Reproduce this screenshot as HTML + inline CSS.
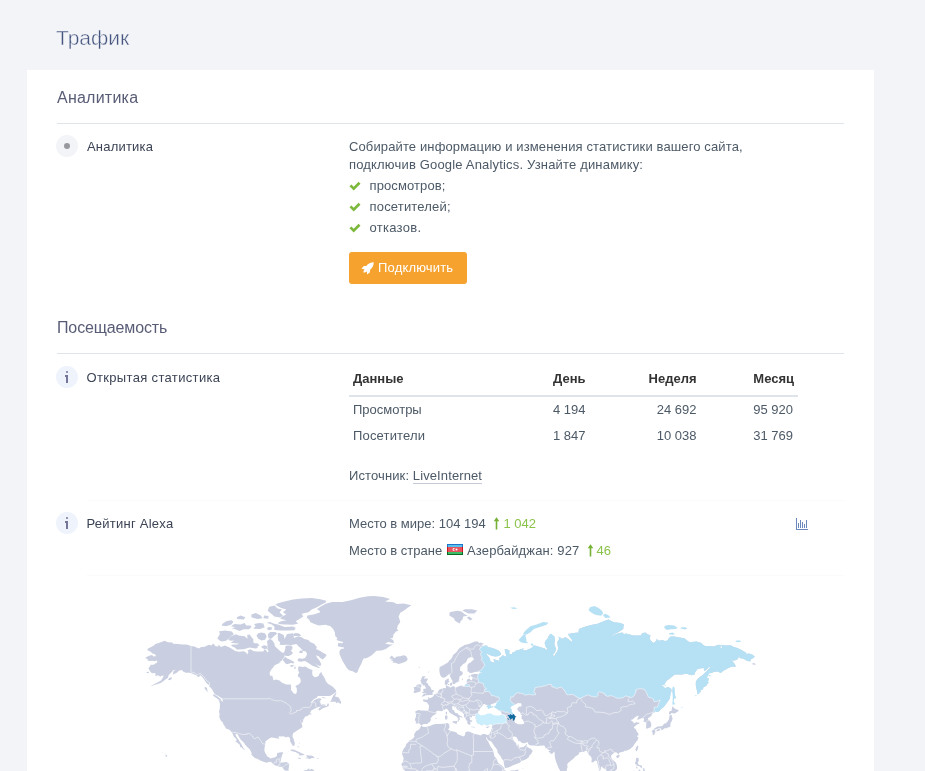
<!DOCTYPE html>
<html lang="ru">
<head>
<meta charset="utf-8">
<title>Трафик</title>
<style>
*{box-sizing:border-box}
html,body{margin:0;padding:0}
body{width:925px;height:771px;overflow:hidden;background:#f2f4f8;font-family:"Liberation Sans",Arial,sans-serif;font-size:13px;color:#4c5966;position:relative}
.title{position:absolute;left:56px;top:26px;font-size:21px;line-height:24px;color:#46557f;font-weight:normal;margin:0;-webkit-text-stroke:0.45px #f2f4f8}
.card{position:absolute;left:27px;top:70px;width:847px;height:720px;background:#fff}
.abs{position:absolute;white-space:nowrap;line-height:15px;font-size:13px}
.h2{position:absolute;left:57px;font-size:16px;line-height:18px;color:#585c75;margin:0;font-weight:normal;white-space:nowrap}
.hr{position:absolute;left:57px;width:787px;height:1px;background:#dfe3ea}
.ico{position:absolute;left:56px;width:22px;height:22px;border-radius:50%;background:#f3f4f7}
.ico.i{background:#eef3fc}
.ico .dot{position:absolute;left:8px;top:8px;width:6px;height:6px;border-radius:50%;background:#98989f}
.ico.i:before{content:"";position:absolute;left:10px;top:5px;width:2.4px;height:2.4px;border-radius:1px;background:#74769a}
.ico.i:after{content:"";position:absolute;left:10px;top:9px;width:2.4px;height:8px;background:#74769a;box-shadow:-1px -3.5px 0 -3px #74769a}
.ico.i i{position:absolute;left:9px;top:9px;width:2px;height:1.6px;background:#74769a}
.lbl{color:#3b4354}
.txt{color:#4c5966}
.b{font-weight:bold;color:#333}
.btn{position:absolute;left:349px;top:252px;width:118px;height:32px;background:#f5a22f;border-radius:3px}
.btn span{position:absolute;left:29px;top:8px;color:#fff;font-size:13px;line-height:15px;white-space:nowrap;letter-spacing:.17px}
.grn{color:#8bc34a}
a.lnk{color:#4c5966;text-decoration:none;border-bottom:1px solid #c5cbd6}
svg.ic{position:absolute;overflow:visible}
#root{position:absolute;left:0;top:0;width:925px;height:771px;will-change:transform}
</style>
</head>
<body>
<div class="card"></div>
<div id="root">
<h1 class="title">Трафик</h1>

<h2 class="h2" style="top:89px;letter-spacing:.23px">Аналитика</h2>
<div class="hr" style="top:123px"></div>
<div class="ico" style="top:135px"><div class="dot"></div></div>
<div class="abs lbl" style="left:87px;top:139px;letter-spacing:.2px">Аналитика</div>
<div class="abs txt" style="left:349px;top:139px;letter-spacing:.125px">Собирайте информацию и изменения статистики вашего сайта,</div>
<div class="abs txt" style="left:349px;top:157px;letter-spacing:.175px">подключив Google Analytics. Узнайте динамику:</div>
<svg class="ic" style="left:349px;top:181px" width="12" height="10" viewBox="0 0 12 10"><path d="M0.5 5.3 L2.4 3.4 L4.7 5.7 L9.6 0.8 L11.5 2.7 L4.7 9.5 Z" fill="#7cb83b"/></svg>
<svg class="ic" style="left:349px;top:202px" width="12" height="10" viewBox="0 0 12 10"><path d="M0.5 5.3 L2.4 3.4 L4.7 5.7 L9.6 0.8 L11.5 2.7 L4.7 9.5 Z" fill="#7cb83b"/></svg>
<svg class="ic" style="left:349px;top:223px" width="12" height="10" viewBox="0 0 12 10"><path d="M0.5 5.3 L2.4 3.4 L4.7 5.7 L9.6 0.8 L11.5 2.7 L4.7 9.5 Z" fill="#7cb83b"/></svg>
<div class="abs txt" style="left:369.5px;top:178px;letter-spacing:.11px">просмотров;</div>
<div class="abs txt" style="left:369.5px;top:199px;letter-spacing:.18px">посетителей;</div>
<div class="abs txt" style="left:369.5px;top:220px;letter-spacing:.29px">отказов.</div>
<div class="btn">
  <svg class="ic" style="left:12px;top:9.5px" width="13" height="13" viewBox="0 0 12 12"><path fill="#fff" d="M11.8 0.2 C9 0.2 6.6 1.4 4.9 3.6 L2.6 3.7 L0.4 6.3 L2.9 6.6 L3.3 7 C2.6 7.6 2.2 8.6 2.3 9.7 C3.4 9.8 4.4 9.4 5 8.7 L5.4 9.1 L5.7 11.6 L8.3 9.4 L8.4 7.1 C10.6 5.4 11.8 3 11.8 0.2 Z"/></svg>
  <span>Подключить</span>
</div>

<h2 class="h2" style="top:319px;letter-spacing:-.13px">Посещаемость</h2>
<div class="hr" style="top:353px"></div>
<div class="ico i" style="top:366px"><i></i></div>
<div class="abs lbl" style="left:86.5px;top:370px;letter-spacing:.34px">Открытая статистика</div>

<div class="abs b" style="left:353px;top:371px">Данные</div>
<div class="abs b" style="left:553px;top:371px">День</div>
<div class="abs b" style="right:228.5px;top:371px">Неделя</div>
<div class="abs b" style="right:131px;top:371px">Месяц</div>
<div style="position:absolute;left:349px;top:395px;width:449px;height:2px;background:#dfe3ea"></div>
<div class="abs txt" style="left:353px;top:402px">Просмотры</div>
<div class="abs txt" style="left:553px;top:402px">4 194</div>
<div class="abs txt" style="right:228.5px;top:402px">24 692</div>
<div class="abs txt" style="right:132px;top:402px">95 920</div>
<div class="abs txt" style="left:353px;top:428px;letter-spacing:.17px">Посетители</div>
<div class="abs txt" style="left:553px;top:428px">1 847</div>
<div class="abs txt" style="right:228.5px;top:428px">10 038</div>
<div class="abs txt" style="right:132px;top:428px">31 769</div>
<div class="abs txt" style="left:349px;top:468px;letter-spacing:.11px">Источник: <a class="lnk">LiveInternet</a></div>

<div style="position:absolute;left:87px;top:500px;width:757px;height:1px;background:#fafbfc"></div>
<div style="position:absolute;left:87px;top:575px;width:757px;height:1px;background:#fafbfc"></div>
<div class="ico i" style="top:512px"><i></i></div>
<div class="abs lbl" style="left:86.5px;top:516px;letter-spacing:.24px">Рейтинг Alexa</div>
<div class="abs txt" style="left:349px;top:516px">Место в мире: 104 194</div>
<svg class="ic" style="left:493px;top:517px" width="7" height="13" viewBox="0 0 7 13"><path d="M3.5 0.2 L6.3 4.2 L4.3 4.2 L4.3 12.6 L2.7 12.6 L2.7 4.2 L0.7 4.2 Z" fill="#76b136"/></svg>
<div class="abs grn" style="left:503.5px;top:516px">1 042</div>
<div class="abs txt" style="left:349px;top:543px">Место в стране</div>
<svg class="ic" style="left:447px;top:544px" width="16" height="11" viewBox="0 0 16 11"><rect width="16" height="3" fill="#1f74c8"/><rect x="1" y="1" width="14" height="2" fill="#56c1ec"/><rect y="3" width="16" height="5" fill="#d0101f"/><rect x="1" y="3" width="14" height="5" fill="#e5545e"/><rect y="8" width="16" height="3" fill="#0a6a22"/><rect x="1" y="8" width="14" height="2" fill="#3ebd68"/><circle cx="7" cy="5.5" r="1.4" fill="#fff"/><circle cx="7.5" cy="5.5" r="1" fill="#e5545e"/><circle cx="9.6" cy="5.5" r=".9" fill="#fff"/></svg>
<div class="abs txt" style="left:467px;top:543px;letter-spacing:.14px">Азербайджан: 927</div>
<svg class="ic" style="left:587px;top:544px" width="7" height="13" viewBox="0 0 7 13"><path d="M3.5 0.2 L6.3 4.2 L4.3 4.2 L4.3 12.6 L2.7 12.6 L2.7 4.2 L0.7 4.2 Z" fill="#76b136"/></svg>
<div class="abs grn" style="left:596.5px;top:543px">46</div>
<svg class="ic" style="left:796px;top:518px" width="12" height="12" viewBox="0 0 12 12" shape-rendering="crispEdges"><path fill="#6a88bc" d="M0 0h1v11h11v1h-12z M2 5h1v5h-1z M4 2h1v8h-1z M6 4h1v6h-1z M8 6h1v4h-1z M10 2h1v8h-1z"/></svg>
</div>
<svg id="map" width="925" height="771" viewBox="0 0 925 771" style="position:absolute;left:0;top:0">
<defs><clipPath id="land"><path d="M421.4 725.5L420.2 724.6L419.2 723.2L417.5 723.6L415.6 723.6L416.0 721.7L414.8 720.0L415.0 718.9L415.8 717.3L416.1 715.3L415.8 713.4L415.1 711.7L416.7 710.7L417.9 709.9L421.3 710.4L424.5 710.6L425.8 710.8L427.9 710.8L428.3 710.5L428.8 708.2L429.1 706.2L428.9 704.9L427.9 704.2L427.2 702.6L425.8 701.9L423.6 701.4L422.9 700.2L423.0 699.6L424.1 699.4L426.4 699.7L427.6 699.5L428.4 699.5L428.2 698.3L427.6 697.2L428.8 697.2L429.1 698.0L430.5 698.1L431.1 697.7L432.8 696.7L433.7 696.1L433.7 694.9L434.1 694.4L435.0 694.2L435.9 693.7L436.9 693.3L437.6 692.5L437.9 692.0L439.0 689.9L440.1 689.3L441.2 688.8L442.9 688.8L443.2 688.1L444.6 688.1L445.5 688.5L445.8 687.7L446.0 687.1L445.6 685.3L445.2 683.9L444.7 683.8L444.8 682.5L444.9 681.0L445.6 680.0L447.9 678.8L449.0 678.4L448.9 679.2L448.5 680.4L449.6 681.6L448.4 682.3L448.0 683.4L447.5 683.8L447.1 684.0L447.0 685.0L447.0 685.5L448.3 686.5L449.8 686.5L449.5 687.4L450.4 687.5L451.5 687.1L452.2 686.4L453.8 685.9L454.3 686.7L455.1 687.5L455.3 687.7L457.4 687.0L459.6 686.0L460.8 685.7L462.1 685.5L462.7 686.5L464.0 686.6L464.8 685.9L465.0 685.2L466.9 683.4L466.7 681.5L466.8 680.3L467.6 679.3L469.4 678.4L470.4 679.8L471.1 680.3L472.0 680.2L472.4 678.3L472.6 677.0L470.9 676.3L470.9 675.5L470.8 674.8L471.9 674.5L473.1 674.2L474.9 673.8L476.1 674.1L478.7 674.2L479.3 673.6L480.3 673.1L482.3 673.1L481.9 672.6L480.3 672.3L479.6 671.9L479.8 671.0L478.3 671.4L476.8 671.7L474.6 672.0L473.4 672.4L470.0 673.3L468.8 671.8L467.2 671.3L467.5 670.0L467.5 668.7L467.3 666.8L467.6 664.7L469.2 663.1L470.3 662.7L472.6 660.4L474.2 659.5L472.7 657.5L472.1 657.3L470.3 657.3L468.6 658.0L467.5 658.7L466.9 660.4L465.5 662.8L462.9 664.2L461.5 666.0L460.5 666.6L460.1 668.4L460.1 669.5L460.2 671.0L461.5 671.3L462.4 671.9L462.9 673.3L462.3 674.6L461.5 675.6L459.9 676.1L459.5 676.8L459.3 678.4L458.9 679.7L458.8 681.1L457.5 682.3L456.0 682.6L455.3 682.9L455.4 683.8L454.4 684.1L453.3 684.2L453.0 683.6L452.6 682.6L452.1 682.0L452.8 681.1L451.8 680.0L451.2 678.6L450.2 677.1L449.9 675.5L449.6 674.8L449.2 673.1L448.8 674.3L448.0 675.2L447.0 675.7L445.9 676.7L444.6 677.5L443.0 677.8L441.2 676.7L440.5 675.5L439.9 674.3L439.5 671.8L439.3 670.1L439.5 668.7L439.6 667.1L441.3 666.3L444.1 664.7L445.9 663.4L447.3 663.1L448.7 661.5L449.2 660.6L450.5 659.5L451.7 658.3L452.4 656.8L453.1 655.1L455.5 653.0L457.2 651.3L458.2 649.5L459.9 647.8L463.1 645.9L465.0 644.7L467.0 644.4L470.1 643.5L471.3 642.9L474.9 641.5L478.1 641.6L479.1 643.2L480.5 642.4L483.9 643.8L481.7 644.9L480.3 644.7L482.1 645.8L483.5 645.6L484.2 646.3L485.4 645.2L487.1 645.8L488.0 647.2L490.5 647.5L493.9 648.6L498.7 650.6L500.7 653.0L501.1 654.2L499.0 655.9L495.6 656.5L492.2 655.9L489.7 655.1L486.1 653.5L487.1 655.3L488.8 657.0L490.2 659.5L490.2 660.9L492.2 662.3L495.8 662.6L493.9 661.2L493.6 659.1L495.6 659.8L498.2 660.6L499.9 660.8L499.0 658.2L501.6 656.5L502.9 655.3L505.8 656.8L506.3 655.6L505.5 653.3L504.6 649.1L507.5 649.5L509.6 650.7L509.2 653.3L510.1 654.3L512.1 653.9L512.6 652.2L514.3 651.9L515.7 650.7L519.4 649.8L523.7 648.2L522.9 650.1L525.4 650.4L528.0 649.4L531.4 648.1L533.9 645.6L536.0 645.8L540.7 647.3L544.8 648.4L546.7 650.1L547.5 649.2L545.5 646.3L544.6 642.9L545.5 640.7L547.5 638.8L548.4 636.2L550.9 634.0L554.3 636.2L555.0 640.4L554.3 643.5L555.2 646.6L556.2 649.5L554.5 653.0L552.6 655.1L554.3 655.9L556.0 653.0L557.2 651.6L558.2 648.6L557.6 645.0L557.4 642.0L559.1 639.1L558.6 636.6L561.8 638.8L563.7 638.2L565.4 636.9L567.1 638.2L569.7 640.1L571.5 642.0L572.2 640.1L569.7 636.9L567.9 634.0L577.3 632.6L578.2 633.6L579.0 628.9L584.1 626.9L590.9 625.1L597.7 623.7L601.1 622.3L606.2 620.2L608.5 619.4L611.2 620.9L613.9 622.3L620.7 623.0L624.1 624.8L623.3 627.2L623.3 628.9L618.2 632.3L612.2 634.9L611.3 635.9L618.2 633.3L622.4 632.6L624.1 634.3L625.8 633.6L633.5 635.6L635.2 635.6L641.1 635.6L642.0 633.3L645.4 632.6L647.1 634.0L650.5 635.6L649.6 638.8L651.3 641.3L650.3 639.9L652.2 642.0L653.9 642.9L656.4 640.4L656.6 639.1L659.0 640.7L662.4 640.1L665.0 641.0L667.5 640.4L668.9 637.9L670.9 636.6L674.3 636.6L679.4 637.5L684.5 638.2L687.1 640.4L689.6 642.3L696.4 641.6L701.5 642.9L703.2 645.0L705.6 646.3L708.3 645.9L713.5 646.6L716.5 645.6L717.4 645.0L720.3 644.7L720.8 645.9L720.3 648.6L722.0 648.1L721.3 644.7L725.4 645.5L730.5 645.3L733.9 646.9L737.3 648.1L741.5 650.1L745.8 652.5L746.6 653.9L749.2 653.6L752.6 654.8L754.8 656.5L753.4 657.9L750.6 659.5L750.6 661.2L748.7 661.2L745.8 660.2L743.2 658.4L739.8 658.2L739.3 655.9L737.6 659.3L734.7 660.6L733.0 660.4L731.3 660.1L733.0 661.7L734.7 663.9L735.9 666.8L732.2 666.6L727.9 668.2L725.4 669.7L723.7 670.5L720.8 672.9L717.7 671.5L713.5 672.0L711.8 673.1L709.2 673.3L708.3 675.3L706.6 677.8L708.7 678.3L708.3 681.0L707.8 682.2L708.9 682.2L706.6 685.1L706.8 685.5L703.2 687.4L703.1 689.3L701.0 690.0L700.4 692.0L698.1 694.3L697.6 694.5L697.3 692.0L696.4 688.6L695.8 685.1L695.9 681.5L697.8 678.8L699.8 677.1L702.4 675.3L705.8 672.0L708.3 669.5L710.9 666.6L708.3 667.6L707.5 668.9L704.1 671.3L703.8 667.9L699.8 668.4L697.3 669.2L694.7 673.1L694.7 674.6L691.3 675.3L687.6 674.1L684.5 673.8L682.8 674.6L679.1 674.6L674.7 674.5L670.1 678.3L666.7 680.8L666.1 681.6L664.1 685.1L661.0 685.5L664.1 687.0L665.0 688.4L667.5 687.0L669.2 687.4L671.4 689.1L671.6 691.6L670.6 693.2L670.1 696.5L669.7 698.8L667.5 702.0L665.8 704.2L663.8 706.9L661.5 708.8L658.8 711.5L657.1 711.9L655.4 711.3L654.2 712.4L653.4 713.0L651.8 714.0L651.7 715.6L649.3 717.6L648.1 718.0L647.8 719.2L649.5 720.4L650.7 722.2L651.2 723.6L651.3 725.5L650.7 727.3L648.8 727.9L646.2 728.8L645.9 727.9L646.2 726.3L646.2 724.2L646.4 722.7L645.4 722.2L643.2 721.4L644.0 720.2L643.9 718.6L642.6 717.7L642.3 717.9L637.9 719.8L637.2 720.1L637.7 718.0L638.7 716.6L638.2 715.8L636.9 716.0L634.5 717.8L632.6 719.6L631.4 719.6L631.1 720.6L633.5 722.0L633.8 723.4L635.2 722.8L636.5 722.0L637.6 722.4L639.4 722.8L639.3 723.8L636.9 724.4L635.9 725.4L634.1 727.1L634.0 728.1L635.7 729.0L636.7 731.3L638.1 733.2L638.4 733.8L638.4 735.3L636.9 736.0L636.7 736.4L638.4 737.1L637.9 739.0L637.9 740.1L636.7 740.9L635.9 742.3L634.7 743.8L633.5 745.8L633.0 746.5L631.9 747.2L630.6 748.7L629.6 749.2L627.5 750.3L625.8 750.7L625.3 751.0L624.3 750.5L624.1 751.4L621.6 752.1L619.9 752.6L619.0 753.2L618.7 754.6L617.8 754.2L617.6 753.3L616.6 752.4L615.3 752.3L614.7 752.4L612.7 753.9L611.3 755.3L611.0 756.9L612.2 759.2L614.2 761.3L615.3 762.0L616.3 763.4L617.0 766.0L617.1 767.7L616.8 769.3L614.9 771.0L613.2 771.9L612.4 773.4L609.3 774.9L609.6 772.5L608.8 771.9L607.1 771.5L606.2 770.3L605.4 769.1L602.8 768.0L602.2 766.5L601.1 766.8L601.0 768.2L600.5 770.0L599.8 771.7L599.9 773.9L601.1 775.1L602.0 777.3L603.7 778.0L605.4 779.7L606.9 782.8L607.1 787.2L603.3 784.7L601.8 780.4L600.6 778.2L598.2 776.1L598.2 774.3L598.8 772.5L598.9 769.6L598.8 768.4L597.9 765.6L597.4 763.5L597.1 761.3L595.7 760.6L594.7 761.1L593.1 762.5L591.3 762.1L591.8 759.5L591.4 757.2L589.1 754.9L587.5 752.6L587.2 751.0L585.8 750.5L584.1 751.7L582.4 752.1L581.1 752.1L579.0 752.6L578.8 753.9L578.5 754.6L577.0 755.5L575.6 756.3L574.1 758.1L572.7 759.2L571.0 760.6L570.0 761.6L568.6 762.5L567.3 763.9L567.3 765.6L567.6 767.2L566.8 769.3L566.8 772.0L565.4 773.7L564.0 774.6L562.9 775.8L561.8 775.1L560.6 772.6L560.0 770.4L558.3 767.5L557.1 764.2L556.5 763.0L555.7 760.4L554.8 756.9L554.7 755.1L554.8 754.4L554.7 753.2L554.3 751.2L553.8 751.9L552.6 753.5L551.8 753.9L550.8 753.5L549.4 752.3L548.3 751.1L550.1 750.5L550.8 749.8L549.6 750.1L549.0 750.1L547.7 749.3L547.0 748.5L545.7 748.0L544.9 746.5L544.3 745.6L542.4 745.5L540.9 745.8L539.0 745.7L537.0 746.0L535.8 745.9L534.1 745.6L531.4 745.4L529.3 745.0L528.0 743.4L527.8 742.3L526.8 742.2L525.4 743.1L524.4 743.3L522.0 743.1L520.5 741.6L518.6 740.9L517.4 739.0L516.4 737.0L515.2 736.8L514.3 736.2L513.7 737.1L512.6 737.1L512.6 738.2L513.3 739.7L514.2 741.4L515.4 742.5L516.3 743.5L516.4 744.9L517.4 746.7L517.4 745.2L518.1 744.1L518.7 745.6L518.8 746.9L518.3 747.4L520.5 747.6L523.5 747.1L525.1 745.7L526.3 744.5L526.9 743.6L526.9 745.1L526.9 746.0L527.5 747.3L530.7 748.7L532.7 750.7L531.9 752.6L530.7 754.4L529.1 755.7L529.1 757.1L527.1 758.6L525.1 759.7L523.0 760.4L521.3 761.0L519.8 762.8L517.7 763.6L514.5 764.8L512.6 765.6L510.1 766.7L507.5 767.7L505.0 768.0L504.6 766.8L504.0 764.2L503.8 762.5L503.5 761.4L503.4 760.6L501.6 758.6L500.9 756.7L499.4 754.8L497.6 752.4L497.3 750.1L495.7 747.8L494.3 746.1L493.0 743.9L491.7 741.9L489.8 740.5L490.5 737.9L490.0 739.4L489.2 741.2L488.1 740.1L487.3 738.8L486.3 737.1L486.1 738.1L486.9 739.9L488.5 742.0L488.8 743.1L489.3 744.1L490.3 746.1L491.4 748.1L491.9 748.1L493.3 751.2L494.3 755.8L494.6 756.7L496.3 758.3L498.1 762.8L499.4 764.0L501.1 764.9L503.7 767.4L504.6 768.4L503.6 769.8L504.4 769.8L505.0 770.2L507.5 771.8L510.9 770.6L514.7 770.3L518.3 769.4L518.4 771.8L517.4 773.4L514.3 781.1L512.6 789.6L417.3 789.6L417.3 782.3L412.6 778.9L408.4 775.1L407.6 773.4L405.4 771.0L402.5 768.4L402.5 766.6L401.2 764.4L402.9 762.1L403.7 758.5L402.9 756.2L401.9 753.7L402.2 751.9L403.8 748.5L405.4 746.7L406.3 744.1L408.2 742.2L409.0 740.8L411.7 739.6L413.6 738.1L414.6 736.2L414.1 735.8L414.3 734.1L415.2 732.6L416.5 730.8L418.0 730.2L419.3 729.3L420.5 727.1L420.9 725.9L421.9 725.7L422.1 726.5L424.3 727.0L425.9 726.9L429.8 726.1L431.1 725.5L433.2 724.6L436.1 724.0L439.6 724.1L442.7 723.8L444.1 723.8L447.7 722.9L448.5 723.9L449.8 723.4L449.0 724.8L449.1 725.9L449.8 726.5L449.2 728.0L448.1 729.6L449.8 730.4L450.6 731.0L453.4 731.5L456.7 732.4L457.2 734.0L459.2 734.7L461.6 735.7L463.5 736.5L465.1 735.1L465.1 733.0L466.0 732.1L467.9 731.5L469.5 731.8L470.3 732.1L471.8 733.0L473.5 733.3L473.8 734.1L475.2 734.1L477.3 734.4L479.5 735.0L480.2 735.4L481.8 734.7L482.7 734.1L483.9 734.0L485.2 734.1L485.9 734.5L487.1 734.9L488.5 734.8L489.3 734.3L490.1 733.1L490.5 731.7L491.4 729.6L491.9 728.5L491.8 726.5L492.1 725.4L492.5 724.4L492.2 723.8L491.1 724.5L489.8 724.0L488.7 725.0L486.9 725.4L485.4 724.5L483.2 723.9L482.9 725.0L482.7 725.2L481.3 725.2L480.5 724.4L479.1 724.0L477.6 723.6L477.3 722.8L477.3 721.9L475.7 721.0L476.6 720.4L476.7 719.6L476.4 719.0L475.3 718.6L475.5 717.6L476.4 716.4L475.3 716.2L475.0 715.9L472.5 715.7L471.8 716.8L471.6 717.7L470.8 717.6L469.9 716.6L469.4 717.6L470.4 719.3L469.9 719.8L471.1 720.6L471.9 721.2L471.8 722.3L471.1 721.8L470.1 721.8L470.4 722.8L470.4 724.7L469.2 724.8L467.9 724.0L466.9 722.2L467.9 721.1L466.9 721.0L466.2 719.8L465.3 718.6L465.0 717.9L464.0 716.7L464.1 715.0L463.9 713.9L461.8 712.3L458.9 710.5L456.8 709.2L456.3 707.4L455.5 706.7L454.5 707.7L453.9 706.3L454.4 706.0L452.0 706.5L452.2 707.5L452.3 709.4L453.9 710.3L455.1 712.7L458.5 713.8L458.0 714.4L459.6 715.4L461.5 716.3L462.4 717.3L462.2 718.0L460.2 716.7L459.2 717.8L460.1 719.5L459.0 720.2L458.3 721.7L457.6 721.4L457.9 720.3L458.4 719.6L458.2 718.9L457.4 717.5L456.1 716.3L455.1 716.0L454.0 715.2L451.8 714.1L451.0 713.4L449.8 712.8L448.8 711.6L448.5 710.4L447.6 709.4L446.1 708.6L444.6 709.8L443.4 710.1L442.3 711.0L441.0 711.3L440.1 710.9L438.8 710.7L437.3 710.7L436.2 711.3L436.1 712.4L436.6 713.0L434.7 714.8L433.1 715.4L432.4 716.2L431.0 717.7L430.4 718.7L431.3 720.1L430.1 720.9L429.8 722.3L428.7 722.5L427.2 724.1L426.8 723.9L425.0 724.1L423.5 724.1L421.8 725.2Z"/></clipPath></defs>
<path fill="#c9cfe0" d="M144.9 657.9L148.5 655.9L151.9 655.1L153.6 656.5L155.6 656.2L155.9 655.3L154.4 653.9L152.4 653.6L151.0 651.9L147.1 650.0L148.1 648.4L153.6 645.8L155.4 644.1L158.7 643.1L164.6 640.7L168.0 642.3L172.3 642.4L173.1 643.7L178.2 644.1L182.5 644.6L186.6 644.6L191.0 646.1L194.4 646.4L198.7 648.4L201.2 646.9L204.6 646.7L208.9 644.7L211.4 645.6L213.1 643.4L215.7 646.3L218.2 646.6L218.7 644.4L220.8 646.9L225.0 645.6L230.1 647.8L235.2 651.0L238.7 651.7L243.8 651.2L246.3 652.8L247.2 654.5L248.4 652.2L247.5 650.4L250.6 649.2L253.1 651.0L257.4 651.6L260.8 651.6L263.3 651.6L264.2 649.5L265.9 650.1L267.6 652.5L268.8 651.0L267.6 650.1L267.1 646.6L267.6 645.0L266.9 641.3L270.1 638.8L272.7 640.7L274.4 643.5L274.9 646.3L277.3 648.6L280.7 651.6L282.9 653.0L284.1 652.2L285.4 648.6L285.3 646.3L287.2 645.5L291.4 645.6L292.6 647.5L292.1 649.5L290.6 650.4L292.6 652.2L292.4 653.9L288.9 655.9L286.3 655.9L284.3 655.3L284.6 657.0L282.9 658.4L281.4 660.9L278.6 662.3L280.9 662.6L276.6 664.2L274.4 665.5L272.7 667.9L271.0 670.0L269.6 672.8L270.1 675.8L272.3 675.8L273.5 680.3L276.1 679.5L279.5 680.5L282.0 682.7L286.3 684.4L290.9 684.6L291.1 687.4L290.9 689.8L292.3 691.6L293.8 693.6L295.2 693.9L296.5 693.2L296.9 690.9L296.7 687.9L295.3 685.9L298.6 684.4L300.6 682.2L300.8 680.3L299.9 677.8L297.7 676.3L298.6 673.3L299.4 672.8L298.2 670.8L298.2 667.1L299.1 666.2L302.5 667.1L305.5 666.6L308.4 668.4L312.5 670.0L312.2 672.8L312.5 675.3L314.7 677.3L316.1 677.1L318.6 676.1L319.3 674.1L321.4 671.8L322.0 674.1L323.7 676.6L325.1 679.1L326.0 681.5L328.2 683.9L330.5 685.3L333.1 687.0L334.0 688.1L336.0 690.2L336.2 692.0L334.0 693.4L330.5 695.7L328.8 696.1L325.8 696.1L322.0 695.9L318.0 696.1L316.4 697.9L314.4 698.8L312.3 700.7L310.5 703.1L311.8 702.7L314.4 700.1L317.8 698.4L320.3 698.2L321.5 699.2L320.0 700.9L318.1 700.8L320.3 701.4L320.3 702.9L321.2 704.8L322.4 705.2L325.4 705.5L326.5 705.9L328.0 703.1L329.2 705.2L327.1 706.7L322.9 708.2L319.5 710.5L318.3 709.7L319.0 708.2L321.4 706.5L318.6 706.9L316.9 707.8L314.4 708.8L312.2 709.9L311.5 710.3L310.6 711.7L310.1 713.0L311.0 714.0L311.8 713.5L311.9 714.2L310.8 714.5L309.4 714.6L308.4 715.0L308.6 715.5L305.7 716.4L305.0 716.7L303.5 719.7L302.5 718.6L303.1 720.0L303.1 721.6L301.8 723.4L301.1 721.6L300.9 719.2L300.6 721.6L301.6 723.8L302.5 727.0L300.8 728.2L298.3 729.7L295.0 731.9L293.1 733.2L292.4 736.2L293.9 739.8L294.8 743.1L294.6 744.8L294.1 745.8L292.9 746.0L291.7 744.1L290.0 741.0L290.2 738.8L288.9 737.1L288.0 736.8L285.6 737.6L285.1 736.7L282.6 736.3L281.2 736.5L279.5 736.2L278.5 736.8L278.8 737.7L279.3 738.8L277.8 738.6L275.6 738.3L273.9 737.8L271.3 737.5L269.6 738.3L267.6 739.7L265.5 741.2L265.2 744.3L264.5 748.0L264.4 751.1L265.4 753.3L267.4 756.5L269.3 757.6L270.3 758.4L273.0 757.8L274.7 757.5L276.6 756.3L276.9 755.4L277.1 753.3L278.4 752.8L281.2 752.3L282.7 752.3L283.3 753.1L282.1 754.8L281.5 757.8L280.9 759.5L280.7 761.3L279.7 762.3L281.2 762.6L282.9 762.5L284.6 762.2L286.3 762.1L287.5 762.4L289.4 763.9L289.0 765.6L288.9 767.4L288.5 769.1L288.5 770.8L289.7 772.5L291.1 773.9L293.1 774.6L295.0 773.7L296.5 773.3L299.2 774.9L300.3 776.0L302.5 771.9L303.7 770.7L304.7 770.3L306.7 770.1L309.0 768.3L309.6 769.4L308.6 770.5L311.8 768.7L314.7 771.0L317.1 771.5L322.0 771.7L325.6 771.3L328.0 774.3L331.4 776.8L334.0 779.4L334.0 786.2L298.2 786.2L299.1 782.8L299.2 778.5L298.4 777.3L297.9 775.3L295.7 774.3L294.3 777.0L293.3 777.3L291.9 776.0L289.9 775.8L288.7 775.2L287.0 773.2L286.1 773.2L284.9 772.5L284.9 770.8L283.6 769.1L282.2 767.5L281.9 767.0L279.8 767.0L277.8 766.1L275.2 765.6L273.9 764.7L271.2 762.1L269.6 761.8L268.8 762.1L266.7 762.8L264.2 762.0L260.9 760.7L258.1 759.3L257.0 758.7L254.8 758.1L253.5 756.8L251.1 754.4L251.8 754.0L251.4 752.4L249.9 749.4L247.3 746.9L245.4 745.1L244.1 743.1L242.2 740.9L240.4 739.2L239.0 737.0L237.8 734.5L235.6 733.6L235.6 735.1L236.9 737.5L238.7 739.7L239.8 742.0L241.5 744.3L243.2 747.7L244.8 749.4L243.9 749.9L243.4 748.9L241.2 747.2L240.2 746.9L239.8 744.7L237.6 743.1L235.1 740.9L236.8 740.7L236.1 738.8L234.1 737.0L233.5 736.0L232.5 733.5L231.7 732.3L231.5 731.9L229.5 729.8L225.9 728.5L225.2 726.7L223.5 724.4L222.5 722.0L221.6 721.6L220.4 719.7L219.2 716.7L219.6 714.0L219.0 711.8L219.8 708.2L219.9 704.7L219.8 703.1L218.7 700.1L221.6 700.5L222.5 702.2L222.8 700.3L221.5 698.1L219.1 696.5L217.4 695.4L214.8 694.3L213.5 692.0L212.3 689.8L210.6 687.4L209.2 686.7L209.5 685.1L208.0 684.4L206.3 682.7L204.6 680.3L202.9 677.8L200.4 675.3L198.5 677.3L196.1 675.3L193.2 674.1L190.1 672.8L185.9 672.8L183.0 671.5L182.0 670.0L179.1 670.5L177.9 671.8L176.7 672.8L172.6 674.8L173.1 673.6L173.5 671.3L175.7 669.7L173.1 670.2L172.3 671.5L169.7 674.1L168.5 675.6L168.0 677.8L164.6 680.3L161.2 682.7L157.8 684.1L154.4 685.1L152.9 685.4L150.3 686.0L153.6 684.4L157.0 682.8L161.0 680.4L163.1 677.3L163.8 675.7L161.2 675.8L160.5 676.8L158.0 675.3L154.9 676.2L155.6 675.1L155.3 673.1L151.9 673.3L150.2 671.5L148.3 668.2L150.2 666.0L150.5 664.7L153.6 664.7L155.3 663.6L157.3 662.6L157.0 660.6L154.4 661.2L152.7 660.8L149.5 660.9L147.6 660.6L147.6 659.0ZM320.3 667.9L318.6 666.8L316.1 664.4L314.2 663.0L317.3 665.0L320.0 666.0L321.0 665.2L321.2 663.9L319.5 660.6L317.3 657.9L315.9 655.3L318.6 656.2L320.3 657.9L322.7 659.5L325.4 657.0L326.6 655.1L325.4 653.9L322.0 652.3L320.3 651.0L316.1 648.9L316.9 647.2L314.2 643.7L310.1 642.0L308.4 640.1L304.2 639.1L301.6 637.2L298.2 636.2L294.0 637.9L293.1 633.3L287.2 634.0L286.3 635.6L284.6 639.1L283.7 634.9L279.5 633.0L277.8 633.0L277.8 637.2L278.1 640.4L280.3 642.6L279.5 644.7L282.9 645.0L286.3 644.7L291.4 645.0L296.5 644.1L298.2 645.9L299.9 647.5L301.6 649.2L303.3 651.0L305.9 651.6L307.1 653.9L305.9 656.8L305.0 657.9L302.5 658.7L299.1 658.3L297.4 659.8L298.2 661.2L300.8 661.7L303.3 661.2L305.0 660.9L308.4 663.1L312.0 665.4L315.2 666.8L318.6 667.9ZM301.3 635.9L299.1 633.6L295.7 633.0L293.1 634.0L294.0 635.9L297.4 635.9ZM231.2 645.0L231.8 646.3L234.4 647.2L236.9 649.5L238.7 649.5L243.8 649.2L246.3 648.4L249.7 647.5L252.3 648.1L255.7 648.6L257.7 648.1L257.4 646.3L259.2 645.9L258.2 643.5L254.8 643.2L253.1 642.0L253.5 639.4L251.4 636.9L249.7 634.6L247.2 634.9L247.5 638.8L244.6 636.2L242.1 635.9L238.7 635.6L236.1 634.3L231.0 636.2L229.3 638.2L228.3 640.1L231.0 640.7L234.4 640.4L230.6 642.7L235.2 643.2L239.5 643.8L236.9 644.4L233.5 644.4ZM221.6 641.6L225.9 640.7L228.4 639.1L231.0 635.9L233.9 634.3L231.8 631.6L225.0 630.6L219.1 631.3L219.9 634.0L217.4 638.2L217.7 638.8L219.9 640.7ZM231.8 628.3L235.2 629.3L239.5 631.0L243.8 629.3L248.9 629.3L251.4 627.2L250.6 625.5L246.3 625.5L244.6 623.0L240.4 624.4L234.4 624.1L231.0 626.2L235.2 627.2ZM221.6 625.5L225.9 626.2L231.0 624.8L233.5 622.0L231.8 620.2L226.7 620.9L222.5 623.7ZM236.9 619.1L243.8 619.4L245.5 617.2L240.4 615.4L236.9 617.2ZM253.1 628.6L259.9 628.9L264.7 627.2L263.3 623.4L259.1 623.0L254.0 624.1L255.7 626.2ZM266.7 628.9L269.3 630.3L271.8 629.6L271.8 627.2L268.4 626.9ZM266.7 622.7L271.8 624.4L274.4 626.5L274.4 630.0L281.2 630.6L288.0 630.6L294.3 630.3L295.7 627.9L293.1 626.5L284.6 626.9L278.6 624.8L273.5 623.4L270.1 622.0ZM256.5 635.6L258.2 638.8L261.6 640.4L265.0 639.8L266.7 636.6L265.0 633.3L261.6 632.6L258.2 633.3ZM268.4 638.2L271.3 638.8L273.5 636.6L277.3 633.6L275.2 632.0L270.1 632.0L267.9 634.3ZM261.6 647.8L265.0 649.2L267.9 648.4L267.6 646.3L264.2 645.3L261.6 646.3ZM282.4 659.8L284.6 662.3L286.3 664.2L289.7 663.4L291.4 662.8L293.1 663.6L294.5 662.8L292.8 660.9L290.6 660.1L288.9 659.0L287.2 658.4L285.4 656.8L284.3 657.9ZM289.7 666.0L291.7 667.1L294.8 665.2L291.4 665.0ZM294.1 668.4L295.8 668.7L295.5 666.6L294.3 667.1ZM299.1 653.0L302.5 653.0L302.8 650.4L299.9 650.4ZM278.6 624.1L284.6 624.4L293.1 624.8L298.2 623.4L295.7 621.2L299.9 618.7L303.3 616.5L301.6 613.8L308.4 612.3L311.8 609.6L316.9 607.2L321.2 604.8L325.4 602.8L326.3 600.7L320.3 599.2L311.8 598.1L301.6 598.4L293.1 599.4L284.6 601.5L277.8 603.2L275.2 604.8L281.2 608.0L286.3 609.6L282.9 612.3L286.3 614.6L282.0 616.5L280.3 618.7L286.3 620.2L281.2 621.2L278.3 622.7ZM267.6 610.8L271.0 613.5L274.4 616.5L280.3 617.6L282.9 615.4L279.5 612.3L282.0 609.6L277.8 608.4L274.4 605.6L269.3 606.8ZM251.4 617.2L257.4 619.1L262.5 618.3L260.8 615.4L255.7 613.1L251.4 614.6ZM263.3 618.3L268.4 618.7L268.4 616.1L264.2 615.4ZM356.2 673.3L352.7 671.3L348.9 670.2L346.4 667.6L345.0 665.0L343.0 661.7L341.4 658.4L339.6 654.2L339.4 651.6L340.9 648.9L344.2 648.6L344.0 647.5L342.5 647.2L337.7 646.3L338.2 644.1L338.0 642.9L342.5 643.2L343.3 642.0L339.9 641.3L336.5 640.1L337.4 637.9L335.3 636.2L334.8 632.3L333.1 628.9L330.5 626.2L325.4 624.8L318.6 625.5L313.9 623.7L310.1 622.0L309.3 619.8L306.7 617.6L307.6 615.4L314.4 614.2L320.3 612.3L319.5 610.8L316.9 609.2L320.3 606.8L326.3 603.6L332.2 601.9L342.5 601.9L351.0 600.3L359.5 597.7L368.0 596.2L374.1 595.9L383.3 596.9L390.1 599.0L385.0 601.5L393.5 602.3L396.9 604.0L403.7 603.6L411.4 605.2L408.0 607.6L403.7 610.8L400.3 612.7L398.6 616.5L400.3 622.0L397.8 625.5L396.9 628.9L398.6 630.6L396.1 631.6L393.5 634.6L392.7 638.2L390.1 637.9L393.5 640.4L393.9 643.2L388.4 642.0L385.0 643.5L389.3 644.4L393.0 644.6L389.3 646.6L385.9 648.9L381.6 650.4L376.5 650.7L373.9 653.3L371.4 655.6L367.0 657.9L363.7 658.4L362.4 660.9L361.5 663.6L360.0 666.3L358.6 668.9L357.8 671.5ZM392.3 662.8L393.5 661.5L390.1 659.8L393.5 659.3L389.3 658.2L391.8 655.5L394.4 658.2L396.9 656.5L400.3 656.2L403.4 655.3L406.1 655.9L407.8 659.3L406.3 661.2L402.9 662.8L398.6 663.9L395.2 662.8ZM330.0 701.8L331.4 699.9L332.2 697.7L333.4 695.4L335.7 693.0L336.5 693.6L334.8 696.5L336.5 696.8L339.1 697.7L339.9 699.9L341.3 702.0L340.6 703.9L339.1 703.1L338.2 702.2L336.0 703.3L335.7 701.8L333.1 701.8ZM321.5 703.7L323.7 704.4L325.4 704.4L324.6 705.2L322.4 704.8ZM321.2 696.8L324.6 697.4L326.0 698.5L322.9 698.1ZM212.6 694.8L214.0 696.5L216.5 698.1L218.2 699.4L220.8 700.3L220.8 699.0L218.6 697.2L216.5 695.7L214.0 694.5ZM204.6 687.0L206.7 687.4L207.2 689.8L208.0 692.0L206.0 690.2L204.6 688.6ZM167.9 679.5L169.7 680.3L171.8 679.1L171.4 677.1L169.7 677.8ZM146.2 672.8L148.5 673.3L149.1 672.0L147.1 671.8ZM751.4 663.9L754.3 664.7L756.3 664.2L753.8 663.1ZM165.5 755.6L165.8 756.9L167.2 756.2L166.8 755.1L165.6 754.8ZM164.3 753.5L165.3 754.0L165.5 753.5ZM161.7 752.4L162.6 752.8L162.2 752.1ZM286.5 751.7L288.0 751.5L289.7 751.2L290.9 750.3L290.7 749.6L293.1 749.6L294.8 749.9L296.5 750.8L299.1 752.1L301.6 753.2L303.3 753.9L304.7 754.7L303.0 755.3L298.7 755.4L299.6 754.0L297.4 753.3L295.7 752.1L293.1 751.5L291.4 750.8L288.9 751.3ZM304.3 758.0L306.7 758.3L308.4 758.5L309.3 759.3L311.0 758.2L313.5 757.9L314.6 757.6L313.2 756.3L311.0 755.5L308.9 755.5L307.1 755.3L306.0 755.6L307.1 756.7L307.7 757.6L305.9 757.7ZM297.6 758.1L299.1 758.9L301.1 758.8L300.6 758.1L298.9 757.8ZM316.6 757.9L316.8 758.6L319.0 758.6L319.1 758.0ZM297.5 746.9L298.6 747.6L298.7 746.3L298.0 746.0ZM298.6 743.2L299.9 743.8L299.6 742.7ZM325.6 772.4L327.1 772.4L327.1 771.2L325.8 771.3ZM421.4 725.5L420.2 724.6L419.2 723.2L417.5 723.6L415.6 723.6L416.0 721.7L414.8 720.0L415.0 718.9L415.8 717.3L416.1 715.3L415.8 713.4L415.1 711.7L416.7 710.7L417.9 709.9L421.3 710.4L424.5 710.6L425.8 710.8L427.9 710.8L428.3 710.5L428.8 708.2L429.1 706.2L428.9 704.9L427.9 704.2L427.2 702.6L425.8 701.9L423.6 701.4L422.9 700.2L423.0 699.6L424.1 699.4L426.4 699.7L427.6 699.5L428.4 699.5L428.2 698.3L427.6 697.2L428.8 697.2L429.1 698.0L430.5 698.1L431.1 697.7L432.8 696.7L433.7 696.1L433.7 694.9L434.1 694.4L435.0 694.2L435.9 693.7L436.9 693.3L437.6 692.5L437.9 692.0L439.0 689.9L440.1 689.3L441.2 688.8L442.9 688.8L443.2 688.1L444.6 688.1L445.5 688.5L445.8 687.7L446.0 687.1L445.6 685.3L445.2 683.9L444.7 683.8L444.8 682.5L444.9 681.0L445.6 680.0L447.9 678.8L449.0 678.4L448.9 679.2L448.5 680.4L449.6 681.6L448.4 682.3L448.0 683.4L447.5 683.8L447.1 684.0L447.0 685.0L447.0 685.5L448.3 686.5L449.8 686.5L449.5 687.4L450.4 687.5L451.5 687.1L452.2 686.4L453.8 685.9L454.3 686.7L455.1 687.5L455.3 687.7L457.4 687.0L459.6 686.0L460.8 685.7L462.1 685.5L462.7 686.5L464.0 686.6L464.8 685.9L465.0 685.2L466.9 683.4L466.7 681.5L466.8 680.3L467.6 679.3L469.4 678.4L470.4 679.8L471.1 680.3L472.0 680.2L472.4 678.3L472.6 677.0L470.9 676.3L470.9 675.5L470.8 674.8L471.9 674.5L473.1 674.2L474.9 673.8L476.1 674.1L478.7 674.2L479.3 673.6L480.3 673.1L482.3 673.1L481.9 672.6L480.3 672.3L479.6 671.9L479.8 671.0L478.3 671.4L476.8 671.7L474.6 672.0L473.4 672.4L470.0 673.3L468.8 671.8L467.2 671.3L467.5 670.0L467.5 668.7L467.3 666.8L467.6 664.7L469.2 663.1L470.3 662.7L472.6 660.4L474.2 659.5L472.7 657.5L472.1 657.3L470.3 657.3L468.6 658.0L467.5 658.7L466.9 660.4L465.5 662.8L462.9 664.2L461.5 666.0L460.5 666.6L460.1 668.4L460.1 669.5L460.2 671.0L461.5 671.3L462.4 671.9L462.9 673.3L462.3 674.6L461.5 675.6L459.9 676.1L459.5 676.8L459.3 678.4L458.9 679.7L458.8 681.1L457.5 682.3L456.0 682.6L455.3 682.9L455.4 683.8L454.4 684.1L453.3 684.2L453.0 683.6L452.6 682.6L452.1 682.0L452.8 681.1L451.8 680.0L451.2 678.6L450.2 677.1L449.9 675.5L449.6 674.8L449.2 673.1L448.8 674.3L448.0 675.2L447.0 675.7L445.9 676.7L444.6 677.5L443.0 677.8L441.2 676.7L440.5 675.5L439.9 674.3L439.5 671.8L439.3 670.1L439.5 668.7L439.6 667.1L441.3 666.3L444.1 664.7L445.9 663.4L447.3 663.1L448.7 661.5L449.2 660.6L450.5 659.5L451.7 658.3L452.4 656.8L453.1 655.1L455.5 653.0L457.2 651.3L458.2 649.5L459.9 647.8L463.1 645.9L465.0 644.7L467.0 644.4L470.1 643.5L471.3 642.9L474.9 641.5L478.1 641.6L479.1 643.2L480.5 642.4L483.9 643.8L481.7 644.9L480.3 644.7L482.1 645.8L483.5 645.6L484.2 646.3L485.4 645.2L487.1 645.8L488.0 647.2L490.5 647.5L493.9 648.6L498.7 650.6L500.7 653.0L501.1 654.2L499.0 655.9L495.6 656.5L492.2 655.9L489.7 655.1L486.1 653.5L487.1 655.3L488.8 657.0L490.2 659.5L490.2 660.9L492.2 662.3L495.8 662.6L493.9 661.2L493.6 659.1L495.6 659.8L498.2 660.6L499.9 660.8L499.0 658.2L501.6 656.5L502.9 655.3L505.8 656.8L506.3 655.6L505.5 653.3L504.6 649.1L507.5 649.5L509.6 650.7L509.2 653.3L510.1 654.3L512.1 653.9L512.6 652.2L514.3 651.9L515.7 650.7L519.4 649.8L523.7 648.2L522.9 650.1L525.4 650.4L528.0 649.4L531.4 648.1L533.9 645.6L536.0 645.8L540.7 647.3L544.8 648.4L546.7 650.1L547.5 649.2L545.5 646.3L544.6 642.9L545.5 640.7L547.5 638.8L548.4 636.2L550.9 634.0L554.3 636.2L555.0 640.4L554.3 643.5L555.2 646.6L556.2 649.5L554.5 653.0L552.6 655.1L554.3 655.9L556.0 653.0L557.2 651.6L558.2 648.6L557.6 645.0L557.4 642.0L559.1 639.1L558.6 636.6L561.8 638.8L563.7 638.2L565.4 636.9L567.1 638.2L569.7 640.1L571.5 642.0L572.2 640.1L569.7 636.9L567.9 634.0L577.3 632.6L578.2 633.6L579.0 628.9L584.1 626.9L590.9 625.1L597.7 623.7L601.1 622.3L606.2 620.2L608.5 619.4L611.2 620.9L613.9 622.3L620.7 623.0L624.1 624.8L623.3 627.2L623.3 628.9L618.2 632.3L612.2 634.9L611.3 635.9L618.2 633.3L622.4 632.6L624.1 634.3L625.8 633.6L633.5 635.6L635.2 635.6L641.1 635.6L642.0 633.3L645.4 632.6L647.1 634.0L650.5 635.6L649.6 638.8L651.3 641.3L650.3 639.9L652.2 642.0L653.9 642.9L656.4 640.4L656.6 639.1L659.0 640.7L662.4 640.1L665.0 641.0L667.5 640.4L668.9 637.9L670.9 636.6L674.3 636.6L679.4 637.5L684.5 638.2L687.1 640.4L689.6 642.3L696.4 641.6L701.5 642.9L703.2 645.0L705.6 646.3L708.3 645.9L713.5 646.6L716.5 645.6L717.4 645.0L720.3 644.7L720.8 645.9L720.3 648.6L722.0 648.1L721.3 644.7L725.4 645.5L730.5 645.3L733.9 646.9L737.3 648.1L741.5 650.1L745.8 652.5L746.6 653.9L749.2 653.6L752.6 654.8L754.8 656.5L753.4 657.9L750.6 659.5L750.6 661.2L748.7 661.2L745.8 660.2L743.2 658.4L739.8 658.2L739.3 655.9L737.6 659.3L734.7 660.6L733.0 660.4L731.3 660.1L733.0 661.7L734.7 663.9L735.9 666.8L732.2 666.6L727.9 668.2L725.4 669.7L723.7 670.5L720.8 672.9L717.7 671.5L713.5 672.0L711.8 673.1L709.2 673.3L708.3 675.3L706.6 677.8L708.7 678.3L708.3 681.0L707.8 682.2L708.9 682.2L706.6 685.1L706.8 685.5L703.2 687.4L703.1 689.3L701.0 690.0L700.4 692.0L698.1 694.3L697.6 694.5L697.3 692.0L696.4 688.6L695.8 685.1L695.9 681.5L697.8 678.8L699.8 677.1L702.4 675.3L705.8 672.0L708.3 669.5L710.9 666.6L708.3 667.6L707.5 668.9L704.1 671.3L703.8 667.9L699.8 668.4L697.3 669.2L694.7 673.1L694.7 674.6L691.3 675.3L687.6 674.1L684.5 673.8L682.8 674.6L679.1 674.6L674.7 674.5L670.1 678.3L666.7 680.8L666.1 681.6L664.1 685.1L661.0 685.5L664.1 687.0L665.0 688.4L667.5 687.0L669.2 687.4L671.4 689.1L671.6 691.6L670.6 693.2L670.1 696.5L669.7 698.8L667.5 702.0L665.8 704.2L663.8 706.9L661.5 708.8L658.8 711.5L657.1 711.9L655.4 711.3L654.2 712.4L653.4 713.0L651.8 714.0L651.7 715.6L649.3 717.6L648.1 718.0L647.8 719.2L649.5 720.4L650.7 722.2L651.2 723.6L651.3 725.5L650.7 727.3L648.8 727.9L646.2 728.8L645.9 727.9L646.2 726.3L646.2 724.2L646.4 722.7L645.4 722.2L643.2 721.4L644.0 720.2L643.9 718.6L642.6 717.7L642.3 717.9L637.9 719.8L637.2 720.1L637.7 718.0L638.7 716.6L638.2 715.8L636.9 716.0L634.5 717.8L632.6 719.6L631.4 719.6L631.1 720.6L633.5 722.0L633.8 723.4L635.2 722.8L636.5 722.0L637.6 722.4L639.4 722.8L639.3 723.8L636.9 724.4L635.9 725.4L634.1 727.1L634.0 728.1L635.7 729.0L636.7 731.3L638.1 733.2L638.4 733.8L638.4 735.3L636.9 736.0L636.7 736.4L638.4 737.1L637.9 739.0L637.9 740.1L636.7 740.9L635.9 742.3L634.7 743.8L633.5 745.8L633.0 746.5L631.9 747.2L630.6 748.7L629.6 749.2L627.5 750.3L625.8 750.7L625.3 751.0L624.3 750.5L624.1 751.4L621.6 752.1L619.9 752.6L619.0 753.2L618.7 754.6L617.8 754.2L617.6 753.3L616.6 752.4L615.3 752.3L614.7 752.4L612.7 753.9L611.3 755.3L611.0 756.9L612.2 759.2L614.2 761.3L615.3 762.0L616.3 763.4L617.0 766.0L617.1 767.7L616.8 769.3L614.9 771.0L613.2 771.9L612.4 773.4L609.3 774.9L609.6 772.5L608.8 771.9L607.1 771.5L606.2 770.3L605.4 769.1L602.8 768.0L602.2 766.5L601.1 766.8L601.0 768.2L600.5 770.0L599.8 771.7L599.9 773.9L601.1 775.1L602.0 777.3L603.7 778.0L605.4 779.7L606.9 782.8L607.1 787.2L603.3 784.7L601.8 780.4L600.6 778.2L598.2 776.1L598.2 774.3L598.8 772.5L598.9 769.6L598.8 768.4L597.9 765.6L597.4 763.5L597.1 761.3L595.7 760.6L594.7 761.1L593.1 762.5L591.3 762.1L591.8 759.5L591.4 757.2L589.1 754.9L587.5 752.6L587.2 751.0L585.8 750.5L584.1 751.7L582.4 752.1L581.1 752.1L579.0 752.6L578.8 753.9L578.5 754.6L577.0 755.5L575.6 756.3L574.1 758.1L572.7 759.2L571.0 760.6L570.0 761.6L568.6 762.5L567.3 763.9L567.3 765.6L567.6 767.2L566.8 769.3L566.8 772.0L565.4 773.7L564.0 774.6L562.9 775.8L561.8 775.1L560.6 772.6L560.0 770.4L558.3 767.5L557.1 764.2L556.5 763.0L555.7 760.4L554.8 756.9L554.7 755.1L554.8 754.4L554.7 753.2L554.3 751.2L553.8 751.9L552.6 753.5L551.8 753.9L550.8 753.5L549.4 752.3L548.3 751.1L550.1 750.5L550.8 749.8L549.6 750.1L549.0 750.1L547.7 749.3L547.0 748.5L545.7 748.0L544.9 746.5L544.3 745.6L542.4 745.5L540.9 745.8L539.0 745.7L537.0 746.0L535.8 745.9L534.1 745.6L531.4 745.4L529.3 745.0L528.0 743.4L527.8 742.3L526.8 742.2L525.4 743.1L524.4 743.3L522.0 743.1L520.5 741.6L518.6 740.9L517.4 739.0L516.4 737.0L515.2 736.8L514.3 736.2L513.7 737.1L512.6 737.1L512.6 738.2L513.3 739.7L514.2 741.4L515.4 742.5L516.3 743.5L516.4 744.9L517.4 746.7L517.4 745.2L518.1 744.1L518.7 745.6L518.8 746.9L518.3 747.4L520.5 747.6L523.5 747.1L525.1 745.7L526.3 744.5L526.9 743.6L526.9 745.1L526.9 746.0L527.5 747.3L530.7 748.7L532.7 750.7L531.9 752.6L530.7 754.4L529.1 755.7L529.1 757.1L527.1 758.6L525.1 759.7L523.0 760.4L521.3 761.0L519.8 762.8L517.7 763.6L514.5 764.8L512.6 765.6L510.1 766.7L507.5 767.7L505.0 768.0L504.6 766.8L504.0 764.2L503.8 762.5L503.5 761.4L503.4 760.6L501.6 758.6L500.9 756.7L499.4 754.8L497.6 752.4L497.3 750.1L495.7 747.8L494.3 746.1L493.0 743.9L491.7 741.9L489.8 740.5L490.5 737.9L490.0 739.4L489.2 741.2L488.1 740.1L487.3 738.8L486.3 737.1L486.1 738.1L486.9 739.9L488.5 742.0L488.8 743.1L489.3 744.1L490.3 746.1L491.4 748.1L491.9 748.1L493.3 751.2L494.3 755.8L494.6 756.7L496.3 758.3L498.1 762.8L499.4 764.0L501.1 764.9L503.7 767.4L504.6 768.4L503.6 769.8L504.4 769.8L505.0 770.2L507.5 771.8L510.9 770.6L514.7 770.3L518.3 769.4L518.4 771.8L517.4 773.4L514.3 781.1L512.6 789.6L417.3 789.6L417.3 782.3L412.6 778.9L408.4 775.1L407.6 773.4L405.4 771.0L402.5 768.4L402.5 766.6L401.2 764.4L402.9 762.1L403.7 758.5L402.9 756.2L401.9 753.7L402.2 751.9L403.8 748.5L405.4 746.7L406.3 744.1L408.2 742.2L409.0 740.8L411.7 739.6L413.6 738.1L414.6 736.2L414.1 735.8L414.3 734.1L415.2 732.6L416.5 730.8L418.0 730.2L419.3 729.3L420.5 727.1L420.9 725.9L421.9 725.7L422.1 726.5L424.3 727.0L425.9 726.9L429.8 726.1L431.1 725.5L433.2 724.6L436.1 724.0L439.6 724.1L442.7 723.8L444.1 723.8L447.7 722.9L448.5 723.9L449.8 723.4L449.0 724.8L449.1 725.9L449.8 726.5L449.2 728.0L448.1 729.6L449.8 730.4L450.6 731.0L453.4 731.5L456.7 732.4L457.2 734.0L459.2 734.7L461.6 735.7L463.5 736.5L465.1 735.1L465.1 733.0L466.0 732.1L467.9 731.5L469.5 731.8L470.3 732.1L471.8 733.0L473.5 733.3L473.8 734.1L475.2 734.1L477.3 734.4L479.5 735.0L480.2 735.4L481.8 734.7L482.7 734.1L483.9 734.0L485.2 734.1L485.9 734.5L487.1 734.9L488.5 734.8L489.3 734.3L490.1 733.1L490.5 731.7L491.4 729.6L491.9 728.5L491.8 726.5L492.1 725.4L492.5 724.4L492.2 723.8L491.1 724.5L489.8 724.0L488.7 725.0L486.9 725.4L485.4 724.5L483.2 723.9L482.9 725.0L482.7 725.2L481.3 725.2L480.5 724.4L479.1 724.0L477.6 723.6L477.3 722.8L477.3 721.9L475.7 721.0L476.6 720.4L476.7 719.6L476.4 719.0L475.3 718.6L475.5 717.6L476.4 716.4L475.3 716.2L475.0 715.9L472.5 715.7L471.8 716.8L471.6 717.7L470.8 717.6L469.9 716.6L469.4 717.6L470.4 719.3L469.9 719.8L471.1 720.6L471.9 721.2L471.8 722.3L471.1 721.8L470.1 721.8L470.4 722.8L470.4 724.7L469.2 724.8L467.9 724.0L466.9 722.2L467.9 721.1L466.9 721.0L466.2 719.8L465.3 718.6L465.0 717.9L464.0 716.7L464.1 715.0L463.9 713.9L461.8 712.3L458.9 710.5L456.8 709.2L456.3 707.4L455.5 706.7L454.5 707.7L453.9 706.3L454.4 706.0L452.0 706.5L452.2 707.5L452.3 709.4L453.9 710.3L455.1 712.7L458.5 713.8L458.0 714.4L459.6 715.4L461.5 716.3L462.4 717.3L462.2 718.0L460.2 716.7L459.2 717.8L460.1 719.5L459.0 720.2L458.3 721.7L457.6 721.4L457.9 720.3L458.4 719.6L458.2 718.9L457.4 717.5L456.1 716.3L455.1 716.0L454.0 715.2L451.8 714.1L451.0 713.4L449.8 712.8L448.8 711.6L448.5 710.4L447.6 709.4L446.1 708.6L444.6 709.8L443.4 710.1L442.3 711.0L441.0 711.3L440.1 710.9L438.8 710.7L437.3 710.7L436.2 711.3L436.1 712.4L436.6 713.0L434.7 714.8L433.1 715.4L432.4 716.2L431.0 717.7L430.4 718.7L431.3 720.1L430.1 720.9L429.8 722.3L428.7 722.5L427.2 724.1L426.8 723.9L425.0 724.1L423.5 724.1L421.8 725.2ZM421.3 696.4L422.4 696.5L424.8 696.1L425.2 695.2L427.6 695.2L429.3 694.9L431.5 694.9L432.7 694.4L433.3 693.9L432.7 693.4L432.0 693.2L432.5 692.5L433.7 691.8L433.9 690.7L433.2 689.9L431.8 689.9L431.3 690.2L431.5 689.3L430.8 688.4L431.1 688.2L430.6 687.4L429.9 686.3L428.9 685.9L428.2 684.4L427.6 683.2L426.5 682.6L425.5 682.7L426.2 682.0L426.7 681.2L427.4 680.0L427.9 679.1L427.6 678.6L425.0 678.6L424.0 678.9L424.3 677.8L425.8 676.3L422.4 676.3L422.1 677.3L421.1 678.8L421.4 679.8L420.2 680.3L421.3 681.5L420.4 682.0L421.6 682.7L421.3 684.4L422.4 684.1L423.0 685.1L422.3 685.5L424.1 685.5L425.2 685.3L424.8 686.5L425.8 687.2L425.8 688.8L423.5 688.8L423.0 690.2L424.0 690.9L423.3 691.8L421.9 692.3L422.4 693.0L425.0 693.4L426.4 693.0L425.5 693.9L423.6 693.9L423.1 694.8L422.3 695.8ZM420.4 691.6L419.2 691.7L417.0 692.5L414.6 693.2L413.3 691.8L414.6 690.7L414.1 689.1L413.8 687.0L416.5 686.7L416.3 685.3L418.5 684.2L420.6 684.6L421.6 686.0L420.6 687.4L420.6 689.1L420.7 690.2ZM449.3 615.4L453.9 618.3L454.8 620.5L457.3 622.3L459.9 623.4L460.7 620.9L462.4 619.8L463.3 616.5L467.5 615.7L464.1 613.8L461.6 611.5L457.3 610.8L453.1 611.5L449.7 612.3ZM462.4 610.4L468.4 613.5L474.4 613.5L477.2 610.4L471.8 609.2L465.0 609.2ZM466.7 617.6L470.1 620.5L472.6 619.1L469.2 616.5ZM669.2 714.6L670.7 714.2L671.2 713.0L674.7 713.6L678.6 711.1L678.2 709.7L676.5 709.5L674.3 708.2L672.4 706.3L671.9 708.4L671.4 710.9L669.7 711.1L668.9 713.0ZM653.7 729.4L655.6 729.6L657.3 728.8L660.2 728.1L660.9 728.8L661.9 730.4L663.9 728.8L664.4 728.2L666.1 728.2L667.2 728.2L667.8 727.1L668.9 727.5L670.7 726.1L670.2 724.6L670.9 722.6L671.8 721.0L672.6 718.6L671.8 716.6L671.6 714.8L669.7 715.2L669.2 717.6L668.9 719.6L667.5 721.6L665.8 723.4L664.1 723.2L664.6 724.0L663.6 724.2L662.4 726.1L661.2 726.3L659.0 726.4L657.3 726.5L655.6 727.7L654.2 728.6ZM651.7 730.9L653.7 729.6L655.1 730.2L655.4 731.7L654.6 734.3L653.4 735.1L652.5 734.5L652.9 732.6L651.8 731.9ZM656.3 730.5L657.3 729.4L659.7 728.8L660.2 729.8L659.3 730.7L657.6 730.9L657.1 731.8ZM635.3 749.8L636.5 751.6L637.6 749.8L638.4 746.3L637.7 745.6L636.4 746.9ZM615.9 756.5L617.3 758.3L619.0 757.2L619.9 755.6L619.0 754.9L617.3 755.3ZM635.7 762.1L635.9 759.5L636.2 757.8L638.4 758.1L638.9 760.4L637.9 762.3L637.9 764.1L639.4 765.1L642.0 765.8L642.1 768.1L640.8 767.4L639.4 766.3L638.2 765.8L636.4 765.8L636.7 764.6L635.3 764.2L635.0 762.5ZM635.9 766.7L637.2 766.7L637.7 768.4L636.7 768.6ZM642.5 768.2L644.2 768.2L644.9 770.6L643.7 772.5L642.7 771.2L643.5 770.0ZM638.6 769.4L640.4 770.0L640.3 771.2L638.6 771.7ZM634.1 770.3L634.3 771.7L631.8 774.3L630.4 775.3L632.6 772.5ZM566.9 773.1L568.6 774.4L570.2 776.8L569.3 779.1L567.4 779.4L566.8 776.8ZM452.1 721.8L453.6 721.2L457.5 721.1L456.7 723.0L456.7 724.2L455.3 723.6L453.1 722.7ZM444.9 715.8L446.6 715.2L447.6 716.6L447.3 719.2L446.3 719.6L445.2 719.4ZM445.6 712.6L447.0 711.5L447.1 713.6L446.6 714.8L445.8 714.0ZM470.9 726.5L472.6 726.7L475.7 727.0L474.4 727.5L471.8 727.3ZM485.9 727.5L487.1 726.8L489.8 726.2L488.6 727.5L487.1 728.2ZM435.0 718.4L436.2 717.8L436.7 718.4L436.1 719.0ZM449.7 683.4L450.9 682.8L452.4 682.6L452.2 684.4L451.4 685.8L450.0 685.4L450.0 684.6ZM447.6 683.9L449.2 683.9L449.3 684.8L448.1 685.0ZM461.8 679.5L463.1 678.1L462.9 679.3L461.9 680.4ZM458.9 682.0L460.1 679.5L459.4 681.5ZM468.2 677.1L468.7 676.3L470.4 676.3L469.9 677.2ZM468.6 675.6L469.6 675.1L470.1 675.8ZM418.4 667.1L419.7 666.8L419.4 668.2ZM428.2 672.0L429.3 671.3L428.9 673.1ZM521.7 768.1L523.7 768.2L522.3 768.6ZM470.4 719.8L472.0 720.4L472.8 721.6L471.1 720.6Z"/>
<g clip-path="url(#land)"><path fill="#b6e1f5" d="M483.5 645.6L480.1 647.9L479.5 649.5L481.8 651.9L480.3 654.2L482.2 657.6L481.3 659.8L482.9 661.7L484.7 665.2L481.7 669.5L478.3 671.4L476.9 672.8L478.7 674.2L477.6 675.8L477.8 678.3L478.1 679.5L478.9 682.3L483.5 683.6L483.4 685.5L485.1 687.9L486.6 688.8L484.2 689.5L485.1 691.8L488.5 691.2L489.5 692.7L491.2 694.3L491.5 695.7L494.8 695.9L495.6 696.8L499.2 697.4L499.4 698.8L498.7 700.9L496.1 701.8L496.0 702.9L493.9 704.6L492.7 706.9L493.9 709.0L497.3 711.1L499.0 710.7L503.3 711.1L505.5 712.4L507.5 712.1L509.9 713.8L510.9 714.5L512.3 715.2L512.6 714.6L513.7 713.9L516.0 710.5L516.0 706.3L514.7 704.4L513.5 703.7L510.9 701.4L510.1 700.1L510.9 698.3L510.6 696.8L513.3 697.0L514.0 695.2L517.4 692.7L520.0 693.2L521.8 693.2L523.7 694.3L525.7 695.2L529.3 694.1L531.4 695.0L533.1 694.8L535.6 694.8L535.4 693.0L533.4 692.0L534.8 690.0L535.1 687.7L538.2 687.0L541.9 686.6L547.0 685.1L548.4 684.4L551.4 684.4L552.1 687.0L555.2 687.2L555.9 688.6L557.7 688.1L561.0 687.0L561.8 687.7L563.5 689.1L567.1 694.8L569.7 694.8L572.9 694.3L575.6 696.3L579.5 698.4L580.4 698.3L583.6 696.8L587.5 694.8L591.9 696.5L596.5 697.0L598.2 695.4L597.7 693.2L599.3 691.8L604.9 693.6L605.0 695.2L607.4 696.3L611.3 695.7L614.6 696.8L615.6 697.9L619.3 698.3L622.9 697.7L625.5 695.9L629.6 696.9L631.6 697.7L634.0 695.9L635.3 693.0L636.4 690.9L635.2 690.2L637.7 689.1L641.1 688.6L644.7 689.6L646.9 693.6L647.9 696.1L648.8 697.4L651.3 697.9L653.4 699.0L653.9 701.6L656.4 701.6L660.2 700.1L659.0 702.5L657.5 707.1L655.6 706.9L653.9 707.6L654.4 710.5L653.2 711.7L653.4 713.0L660.7 715.6L671.8 708.4L671.8 696.5L670.9 689.8L686.2 692.0L698.1 697.7L716.9 689.8L745.8 672.8L755.7 662.3L755.7 645.0L737.3 638.8L686.2 618.3L601.1 602.8L499.0 638.8L486.3 643.2Z"/><path fill="#b6e1f5" d="M464.3 686.4L469.8 686.6L469.8 685.3L468.4 684.8L467.2 684.4L465.8 683.9L464.1 685.1Z"/></g>
<path fill="#b6e1f5" d="M518.6 640.1L520.8 642.3L523.7 642.9L528.3 643.2L526.3 641.3L526.3 638.8L525.4 635.9L526.6 634.6L523.7 634.3L522.0 636.2L520.3 637.9ZM522.9 634.0L527.1 634.3L530.5 632.3L533.9 628.9L539.9 626.9L546.7 624.8L548.4 622.7L543.3 622.0L536.5 624.4L530.5 626.2L527.1 628.9L524.6 631.6ZM510.1 607.8L513.5 609.0L517.7 608.4L514.3 607.2ZM530.5 645.0L533.6 645.9L533.1 643.8L531.4 643.5ZM549.2 634.6L552.6 635.3L551.8 634.0L550.1 633.8ZM588.4 610.0L591.8 613.1L596.0 615.0L601.1 615.7L603.2 613.5L602.0 610.8L598.6 608.0L594.3 606.0L590.1 607.2ZM602.8 615.0L605.4 618.0L610.5 617.6L608.8 615.4L605.4 613.8ZM664.1 627.6L666.7 630.0L670.9 629.3L675.2 628.9L677.7 627.9L674.3 625.5L668.4 625.1L665.0 625.8ZM668.9 634.3L672.6 634.8L675.2 634.3L672.6 632.6L669.2 633.3ZM680.3 628.3L684.5 629.6L687.6 628.6L685.4 627.2L681.1 627.2ZM735.1 641.6L738.1 642.3L741.4 641.6L739.8 640.4L736.6 640.4ZM672.8 686.7L674.1 686.7L674.8 689.1L674.8 692.0L675.2 695.4L676.2 698.1L674.3 698.8L673.6 700.9L674.7 703.5L675.2 705.0L674.0 704.0L672.8 705.5L672.4 703.5L672.6 700.9L672.8 697.7L672.6 694.3L672.1 691.4L672.3 688.8ZM709.2 675.1L710.9 675.6L710.6 676.6L709.0 676.1ZM664.6 684.8L666.3 685.1L665.8 685.8L664.6 685.5ZM695.9 694.8L696.8 695.2L695.6 696.3L695.1 695.9ZM681.1 707.4L684.2 706.3L682.8 706.9L680.8 708.4Z"/>
<g clip-path="url(#land)"><path fill="#cbeefd" d="M480.3 711.5L478.6 713.7L476.9 713.6L475.8 714.2L475.3 716.2L474.4 717.6L474.9 720.6L476.9 725.0L480.3 726.5L487.1 726.3L491.4 726.3L492.1 725.4L492.1 725.4L492.5 725.8L493.3 725.1L493.9 724.3L496.5 723.9L499.0 724.0L500.7 723.4L503.0 723.4L504.1 723.0L505.8 723.0L507.2 723.3L506.2 721.8L506.5 721.0L505.8 718.9L506.5 718.8L507.2 718.2L505.3 717.4L505.3 716.2L504.9 715.4L503.3 714.6L501.7 714.6L501.2 713.6L495.6 711.9Z"/></g>
<path fill="#fff" d="M480.5 715.2L482.0 715.3L485.1 714.7L487.7 713.6L490.8 713.5L492.2 714.1L492.8 715.0L493.8 714.9L495.5 715.6L498.5 715.6L499.9 715.5L501.7 714.5L501.8 713.3L500.7 711.5L499.0 710.7L498.5 710.3L497.4 709.2L495.3 708.0L494.4 707.6L493.2 707.0L493.8 706.5L494.6 706.6L495.5 705.5L495.9 705.1L496.0 703.7L497.8 702.8L497.2 702.7L494.9 703.0L493.6 703.6L492.0 704.0L490.2 704.9L490.9 706.6L492.9 706.4L493.1 706.6L492.9 707.3L491.2 707.3L489.1 708.4L488.4 708.6L487.8 708.2L487.7 706.9L486.3 706.6L488.0 705.2L488.1 704.9L486.9 705.0L485.1 704.6L484.6 704.0L483.3 704.2L482.9 705.0L481.5 706.9L480.3 708.0L479.7 709.0L479.4 710.7L478.5 711.1L477.8 712.6L478.6 713.8ZM513.5 705.5L515.2 704.4L516.9 703.4L518.6 703.1L519.3 703.2L521.1 703.3L521.5 704.6L521.3 706.5L519.4 706.5L518.1 707.4L517.7 708.4L516.5 708.4L518.0 710.2L518.3 711.3L520.0 711.9L520.6 713.6L521.0 715.0L522.3 715.2L522.2 716.2L521.1 716.4L521.5 717.6L521.5 718.8L522.7 719.6L523.7 721.6L524.0 723.0L523.9 723.8L521.7 724.2L520.6 724.2L518.4 724.3L517.2 723.8L515.1 722.7L514.2 720.8L514.1 720.1L515.0 718.9L514.9 717.6L515.9 716.9L516.7 716.8L515.5 716.4L514.7 715.4L513.7 713.9L513.2 713.4L511.8 711.5L511.6 710.1L512.1 709.5L510.6 708.6L510.4 707.8L511.4 706.5L512.0 705.9Z"/>
<path fill="#b6e1f5" d="M486.3 706.6L488.0 705.2L488.3 704.9L490.2 705.0L491.0 706.5L493.1 706.4L492.9 707.3L491.2 707.4L489.1 708.5L488.1 708.7L487.7 708.2L487.8 707.0Z"/>
<path fill="none" stroke="#fff" stroke-width="0.6" stroke-opacity="0.85" stroke-linejoin="round" d="M191.0 646.1L191.0 672.0L194.2 672.6L197.0 675.3L198.7 674.1L200.4 673.3L201.2 674.6L203.9 676.8L206.3 680.3L209.7 682.7L209.5 685.1M221.5 698.8L269.0 698.8L269.6 698.0L271.8 699.6L275.2 700.7L278.5 700.9L280.5 700.3L286.6 703.3L287.3 704.2L288.9 705.2L290.6 706.7L291.2 710.3L289.5 713.2L290.6 714.2L296.5 711.9L296.4 711.0L296.5 710.5L300.3 710.3L301.1 709.0L303.8 707.4L309.3 707.4L310.5 706.5L311.3 704.8L311.8 703.7L313.2 702.1L314.7 702.4L315.6 702.9L315.6 705.9L316.3 706.9L316.9 707.8M231.7 732.3L235.6 732.3L242.1 734.5L246.8 734.5L246.8 733.6L249.7 733.6L252.3 735.8L253.1 737.7L255.3 738.8L256.5 737.4L258.4 737.3L260.3 740.1L261.6 741.6L262.3 743.6L265.6 744.4M274.0 764.8L274.0 763.5L274.8 762.1L277.0 762.0L276.1 760.0L277.8 759.0L279.2 759.0L279.2 762.3L279.7 762.3M279.2 759.0L280.7 757.9M277.6 766.1L278.8 764.9L279.2 763.9L280.3 763.4L280.7 762.7M281.5 766.7L280.3 765.7L278.8 764.9M281.7 767.4L283.4 766.8L284.6 765.6L286.5 764.2L289.4 763.9M285.1 770.6L286.6 770.8L288.5 771.0M427.2 727.3L427.9 728.4L428.1 731.3L428.9 732.8L424.8 735.3L422.4 737.0L416.2 739.4L416.2 742.0L422.7 746.1L432.9 753.2L433.0 753.9L436.4 755.5L436.6 756.9L438.2 756.6L440.8 756.1L443.7 753.5L451.4 748.9L455.1 750.5L456.5 749.8L471.8 756.0L471.8 755.1L473.5 755.1L473.5 751.5L493.3 751.5M408.5 741.3L416.2 741.3M416.2 744.3L410.5 744.3L410.5 748.9L408.8 749.8L408.8 752.7L402.2 752.7M422.7 746.1L419.9 746.1L421.6 761.3L421.9 761.6L421.4 763.0L415.1 763.0L412.4 763.7L411.4 762.8L410.2 764.2L408.8 763.0L407.1 761.6L405.4 761.0L402.9 762.1M410.2 764.2L411.6 768.4L411.4 769.1L407.6 768.1L405.4 767.9L402.5 768.5M402.5 766.3L405.4 766.0L407.5 766.7L405.4 767.0L402.5 767.2M411.6 768.4L413.1 769.1L414.8 768.6L416.5 770.0L417.3 772.2M416.5 770.0L419.9 771.7L421.6 771.9L421.9 769.4L424.1 766.8L427.6 765.3L431.5 763.9L436.9 763.2L438.2 760.6L438.2 756.6M421.6 771.9L426.2 773.4L426.2 770.8L431.0 770.8L432.5 770.8L434.4 767.9L431.5 763.9M432.5 770.8L433.7 770.1L435.0 768.6L437.1 769.6L437.9 766.5L442.9 767.4L448.0 766.8L454.1 766.1L457.3 760.6L457.3 753.3L456.5 749.8M434.4 767.9L435.0 768.6M437.1 769.6L437.4 771.7L435.7 774.3M454.1 766.1L455.1 768.4L455.8 770.0L454.4 770.8L452.2 775.1M455.1 768.4L456.5 768.9L456.7 771.2L457.3 772.5L454.8 772.5M457.3 772.5L459.9 776.0L463.3 774.3L466.7 771.5L469.9 770.8L468.7 767.9L469.2 765.3L469.9 763.0L471.8 762.7L471.8 756.0M469.9 770.8L471.8 774.3L473.5 772.0L478.6 773.6L482.0 772.5L486.3 769.1L487.5 768.7L487.5 771.3L488.8 773.4M445.6 723.8L445.1 727.5L443.7 729.8L446.3 733.0L447.1 736.4L447.8 740.1L447.0 743.6L448.0 746.9L451.4 748.9M450.6 731.0L448.5 733.6L447.1 736.4M473.8 734.1L473.0 736.6L473.5 738.4L473.5 751.5M496.6 758.6L493.9 760.4L493.1 763.9L493.1 765.1L492.4 767.9L490.5 770.8L488.8 773.4M493.1 765.1L495.5 764.1L499.0 764.8L501.6 767.0L503.1 768.2M503.1 768.2L502.1 770.8L504.0 770.8L504.4 770.0M504.0 770.8L504.1 773.4L505.8 774.3L510.9 776.0L512.6 776.0M514.3 770.3L514.2 773.4L512.6 776.0M489.2 734.7L490.3 737.9M490.5 737.9L491.4 734.1L491.5 731.9L490.7 731.1M490.5 738.1L492.4 738.4L494.8 737.0L495.6 736.0L493.9 734.1L497.3 733.2L497.7 732.9L499.7 733.4L502.6 734.9L507.0 738.4L510.1 738.6L511.6 738.8L512.1 739.7L513.3 739.7M491.7 731.9L493.6 732.6L497.0 730.5L497.7 732.9M497.0 730.5L500.7 728.6L501.1 725.5L503.0 723.4M510.1 738.6L510.9 737.0L512.6 737.0L512.6 737.1M491.5 730.9L492.2 730.2L493.2 729.0L492.7 728.2L492.1 728.2M507.2 723.3L508.2 725.5L509.7 725.9L508.2 728.4L508.9 729.4L509.6 730.9L512.5 733.6L512.1 735.1L512.6 736.0L513.7 737.1M503.8 761.4L504.6 759.5L506.7 759.7L509.9 760.0L511.8 760.2L514.0 758.1L519.4 756.9L521.3 761.0M519.4 756.9L524.6 755.1L525.7 751.5L524.9 750.3L520.5 749.9L518.8 747.8L518.8 747.4M524.9 750.3L525.9 748.0L526.3 746.3L526.9 745.1M517.4 746.6L518.1 746.9M522.7 722.9L524.2 722.7L525.4 721.4L528.3 721.1L530.5 722.3L531.9 722.6L533.7 724.3L535.0 724.3L535.1 726.3L534.8 728.4L533.9 730.2L534.5 734.1L536.1 735.1L534.5 737.2L536.1 739.6L537.8 740.2L537.8 742.1L538.7 743.2L536.3 744.0L535.8 745.8M535.1 726.3L537.0 726.9L538.3 725.7L540.7 725.0L542.6 722.6L544.1 722.9L546.3 723.2L548.9 723.4L550.4 722.4L551.6 720.8L552.8 721.8L552.6 724.0L555.7 722.7L558.4 723.1M534.5 737.2L537.3 738.1L540.0 738.1L543.8 737.1L544.0 735.3L546.3 734.3L548.9 733.4L549.2 731.3L550.6 730.7L550.1 729.4L552.0 729.2L552.8 727.1L552.1 725.3L554.3 724.0L556.9 723.9L558.4 723.1M520.3 714.1L522.9 712.9L525.4 715.0L526.3 715.0L528.0 715.0L528.1 713.8L530.5 712.1L533.1 713.2L533.2 714.8L536.3 715.4L537.3 717.6L539.9 719.7L542.6 721.0L544.1 722.9M526.3 715.0L526.3 707.4L530.7 706.2L534.8 708.6L536.5 710.5L541.4 710.1L543.4 711.5L543.3 712.8L544.1 713.6L544.5 715.2L546.7 715.6L548.4 714.9L550.1 713.6L551.8 713.0L552.1 711.9L556.0 712.7L557.2 711.1L560.0 711.7L564.5 711.7L567.4 713.2M567.4 713.2L563.7 715.6L561.1 716.7L559.8 717.0L556.9 717.5L556.3 718.7L556.9 720.6L558.6 722.6L558.4 723.1M546.3 723.2L546.7 720.0L546.2 718.4L548.4 717.4L550.9 717.0L551.1 715.6L553.0 714.6L555.2 716.0L553.0 717.2L550.9 717.6L548.9 718.4L551.3 718.6L556.3 718.7M551.8 713.0L551.1 715.6M579.5 698.4L577.0 700.1L576.6 702.9L572.2 702.7L571.2 706.3L567.9 707.4L567.1 707.8L567.9 711.5L567.4 713.2M580.4 698.3L581.6 700.5L585.6 704.6L585.6 706.9L590.1 707.6L593.3 708.8L595.0 712.0L601.1 712.3L604.2 712.6L609.6 714.4L613.9 712.7L618.2 712.3L621.5 710.1L620.5 708.6L621.6 707.1L625.8 706.5L628.4 705.9L629.4 704.6L634.8 703.9L635.0 703.1L632.6 701.1L630.7 701.7L627.7 701.2L628.4 699.2L629.6 696.9M642.6 717.7L645.4 715.6L646.9 714.0L649.0 713.6L651.7 712.7L653.3 712.8M645.6 722.1L647.1 721.0L649.4 720.4M614.7 752.4L612.5 751.5L612.2 749.9L610.2 749.2L607.8 750.7L604.8 750.8L604.2 753.0L603.1 752.4L601.1 752.1L599.8 751.4L599.4 749.6L599.1 747.8L597.0 748.0L597.0 746.6L598.9 744.5L598.9 741.4L596.6 740.2L594.3 738.1L591.9 738.3L589.7 739.4L587.7 741.0L586.9 741.0L585.0 740.5L582.4 741.6L582.2 742.0L582.1 740.7L580.9 740.9L577.3 740.7L575.8 739.6L573.9 738.3L570.5 736.4L568.8 736.6L565.4 734.3L564.9 732.1L566.2 731.7L565.2 728.8L563.4 726.5L560.3 725.7L558.4 723.1M558.4 723.1L556.9 728.1L557.6 731.7L559.3 732.6L557.7 734.9L556.7 736.2L555.0 738.8L553.3 740.9L550.8 740.7L549.2 742.5L550.4 743.4L550.3 744.9L551.8 747.2L548.0 747.4L547.0 748.5M568.8 736.6L567.3 739.2L572.2 741.8L575.6 743.2L580.9 743.6L580.9 740.9M582.2 742.0L582.2 742.9L583.8 743.1L587.5 742.8L587.7 741.0M580.9 743.6L582.2 743.8L583.8 744.3L583.8 745.6L587.5 745.8L588.2 746.3L586.2 747.8L586.5 749.6L588.0 748.5L588.5 751.6L588.0 753.9M580.9 743.6L581.4 745.8L580.9 747.1L581.9 747.4L581.7 749.4L582.4 751.5L582.4 752.1M596.6 740.2L594.7 742.0L593.0 744.3L591.9 745.8L592.1 747.6L589.7 748.0L589.9 749.8L588.5 751.6M599.1 772.5L599.8 770.0L599.6 767.0L598.1 763.9L598.8 762.0L597.4 759.5L597.4 757.8L599.4 755.5L601.3 754.5L603.1 752.4M601.3 754.5L602.0 756.0L603.2 756.0L603.2 759.2L604.7 758.3L606.2 757.9L607.9 758.1L609.3 759.9L609.2 761.3L610.5 762.8L610.5 764.9L610.0 765.1M604.8 750.8L606.2 753.3L609.0 754.4L607.9 756.2L610.0 757.6L612.4 761.1L613.9 763.9L614.0 764.4L613.9 768.6L611.2 769.6L611.7 770.8L609.8 770.9L608.7 771.9M606.1 769.6L605.2 766.5L606.2 765.3L610.0 765.1L611.3 765.6L614.0 764.4M415.8 713.8L417.0 713.4L419.7 713.7L420.4 714.4L419.2 715.6L419.0 718.2L418.2 718.4L419.0 719.6L418.5 720.6L419.0 721.2L418.2 722.6L418.4 723.2M427.9 710.8L429.8 711.7L432.1 712.1L433.8 712.6L436.3 712.7M443.7 709.9L442.9 708.9L442.7 707.4L442.9 705.5L442.5 704.4L441.3 704.8L441.3 704.0L442.9 702.2L443.9 701.8L444.9 698.8L441.8 697.7L440.8 697.7L439.3 696.5L438.1 696.5L435.3 694.1M436.7 693.4L438.3 693.4L439.5 693.3L441.0 694.1L440.7 694.8L441.2 694.9L441.2 692.5L442.5 692.2L443.0 690.7L443.2 689.2M441.2 694.9L441.8 695.9L441.3 696.3L441.8 697.7M440.8 697.7L440.8 696.3L441.3 696.3M445.7 685.3L447.0 685.5M455.2 687.7L455.5 689.3L454.9 690.1L456.0 691.8L456.1 693.2L456.5 694.3L455.3 694.3L452.9 695.7L451.5 695.9L452.2 697.2L454.4 699.3L453.1 700.3L452.7 701.6L453.1 702.0L451.7 701.7L448.8 702.0L447.3 702.0L445.6 701.5L443.9 701.8M442.9 705.5L444.3 705.5L445.3 704.3L446.3 705.6L446.8 704.4L448.1 704.8L448.7 703.4L447.3 702.9L447.3 702.0M448.7 703.4L451.7 703.0L452.1 703.7L454.3 704.2L454.1 705.7L454.4 706.1M454.3 704.2L456.5 704.0L458.4 703.4L459.0 702.2L460.1 700.9L459.8 699.6L456.5 698.8L454.4 699.3M456.5 694.3L458.7 695.1L459.7 695.9L461.1 695.9L463.0 697.7L465.2 698.3L469.3 698.5L469.6 697.4L472.0 695.2L471.1 693.2L471.1 690.7L471.6 687.7L470.9 687.5L469.8 686.6L464.3 686.4M470.9 687.5L474.7 686.7L474.9 685.3L476.2 683.4L478.9 682.3M466.8 682.5L469.9 681.7L473.3 681.7L476.2 683.4M472.4 678.1L474.0 677.8L476.1 679.1L477.6 678.9M469.8 686.6L469.8 685.3L468.4 684.8L467.2 684.4M471.1 693.2L473.5 692.3L477.2 693.0L480.6 693.0L483.0 693.6L483.7 691.8L485.1 691.8M459.8 699.6L461.6 698.8L463.0 697.7M460.1 700.9L462.9 701.4L465.0 700.5L468.6 700.1L469.3 698.5M468.6 700.1L469.9 700.9L467.5 703.7L465.5 704.9L463.1 705.5L460.7 705.3L459.0 704.2L458.4 703.4M469.9 700.9L473.3 701.6L476.2 700.4L477.8 699.9L480.6 701.2L482.2 704.4L478.9 706.4L481.5 706.9M476.2 700.4L478.8 703.3L478.9 706.4M479.6 710.0L476.9 709.1L474.2 710.2L469.6 709.0L467.4 707.8L465.5 704.9M469.6 709.0L469.1 713.0L470.0 714.9L472.6 714.8L475.8 714.2M470.0 714.9L466.7 715.9L465.0 718.2M454.1 706.3L457.0 706.4L459.0 704.2M457.8 707.8L459.7 706.8L463.3 707.6L464.0 707.6L464.0 710.3L462.4 712.6M457.8 707.8L460.9 711.5L462.4 712.6M463.1 705.5L463.3 707.6M464.0 710.3L465.5 711.9L466.0 713.8L466.7 715.9M463.9 713.9L465.5 711.9L467.7 713.1L469.1 713.0M466.0 713.8L467.7 713.1M464.0 710.3L465.5 710.9L467.7 713.1M449.9 675.5L451.0 673.6L452.2 672.3L451.7 670.2L451.9 668.4L451.5 666.0L451.4 663.6L454.6 661.7L455.3 659.0L457.2 655.9L458.9 652.8L461.4 651.0L465.9 647.9L470.9 651.3L471.1 653.3L472.1 657.3M465.9 647.9L467.5 647.2L470.1 649.1L473.5 649.2L474.9 646.3L476.1 645.2L478.6 644.9L480.8 647.2L480.1 647.9M418.5 685.1L417.2 686.3L418.5 687.2L420.2 687.2M501.7 714.6L503.3 714.6L504.9 715.4L507.5 715.0M504.9 715.4L505.3 716.2L505.3 717.4L507.2 718.2M483.5 645.6L480.1 647.9L479.5 649.5L481.8 651.9L480.3 654.2L482.2 657.6L481.3 659.8L482.9 661.7L484.7 665.2L481.7 669.5L478.3 671.4M478.7 674.2L477.6 675.8L477.8 678.3L478.1 679.5L478.9 682.3L483.5 683.6L483.4 685.5L485.1 687.9L486.6 688.8L484.2 689.5L485.1 691.8L488.5 691.2L489.5 692.7L491.2 694.3L491.5 695.7L494.8 695.9L495.6 696.8L499.2 697.4L499.4 698.8L498.7 700.9L496.1 701.8L496.0 702.9M499.0 710.7L503.3 711.1L505.5 712.4L507.5 712.1L509.9 713.8L510.9 714.5L512.3 715.2L512.6 714.6L513.7 713.9M514.7 704.4L513.5 703.7L510.9 701.4L510.1 700.1L510.9 698.3L510.6 696.8L513.3 697.0L514.0 695.2L517.4 692.7L520.0 693.2L521.8 693.2L523.7 694.3L525.7 695.2L529.3 694.1L531.4 695.0L533.1 694.8L535.6 694.8L535.4 693.0L533.4 692.0L534.8 690.0L535.1 687.7L538.2 687.0L541.9 686.6L547.0 685.1L548.4 684.4L551.4 684.4L552.1 687.0L555.2 687.2L555.9 688.6L557.7 688.1L561.0 687.0L561.8 687.7L563.5 689.1L567.1 694.8L569.7 694.8L572.9 694.3L575.6 696.3L579.5 698.4L580.4 698.3L583.6 696.8L587.5 694.8L591.9 696.5L596.5 697.0L598.2 695.4L597.7 693.2L599.3 691.8L604.9 693.6L605.0 695.2L607.4 696.3L611.3 695.7L614.6 696.8L615.6 697.9L619.3 698.3L622.9 697.7L625.5 695.9L629.6 696.9L631.6 697.7L634.0 695.9L635.3 693.0L636.4 690.9L635.2 690.2L637.7 689.1L641.1 688.6L644.7 689.6L646.9 693.6L647.9 696.1L648.8 697.4L651.3 697.9L653.4 699.0L653.9 701.6L656.4 701.6L660.2 700.1L659.0 702.5L657.5 707.1L655.6 706.9L653.9 707.6L654.4 710.5L653.2 711.7L653.4 713.0M478.6 713.7L476.9 713.6L475.8 714.2L475.3 716.2M501.7 714.6L503.3 714.6L504.9 715.4L505.3 716.2L505.3 717.4L507.2 718.2L506.5 718.8L505.8 718.9L506.5 721.0L506.2 721.8L507.2 723.3L505.8 723.0L504.1 723.0L503.0 723.4L500.7 723.4L499.0 724.0L496.5 723.9L493.9 724.3L493.3 725.1L492.5 725.8L492.1 725.4"/>
<path fill="#106a9e" d="M507.5 715.0L508.0 714.7L509.2 715.2L510.4 715.0L509.7 714.2L509.9 713.8L510.9 714.5L512.3 715.2L512.6 714.6L513.7 713.9L514.7 715.4L515.5 716.4L516.7 716.8L515.9 717.0L515.0 717.8L515.0 719.0L514.2 720.0L514.2 720.7L513.7 720.8L512.6 720.0L513.2 718.9L512.5 718.3L510.9 719.2L510.1 719.8L510.1 718.6L508.9 717.8L509.1 717.1L508.4 716.3L507.9 715.6ZM507.2 718.2L508.4 718.6L509.4 719.8L508.2 719.6L507.4 718.8Z"/>
</svg>
</body>
</html>
